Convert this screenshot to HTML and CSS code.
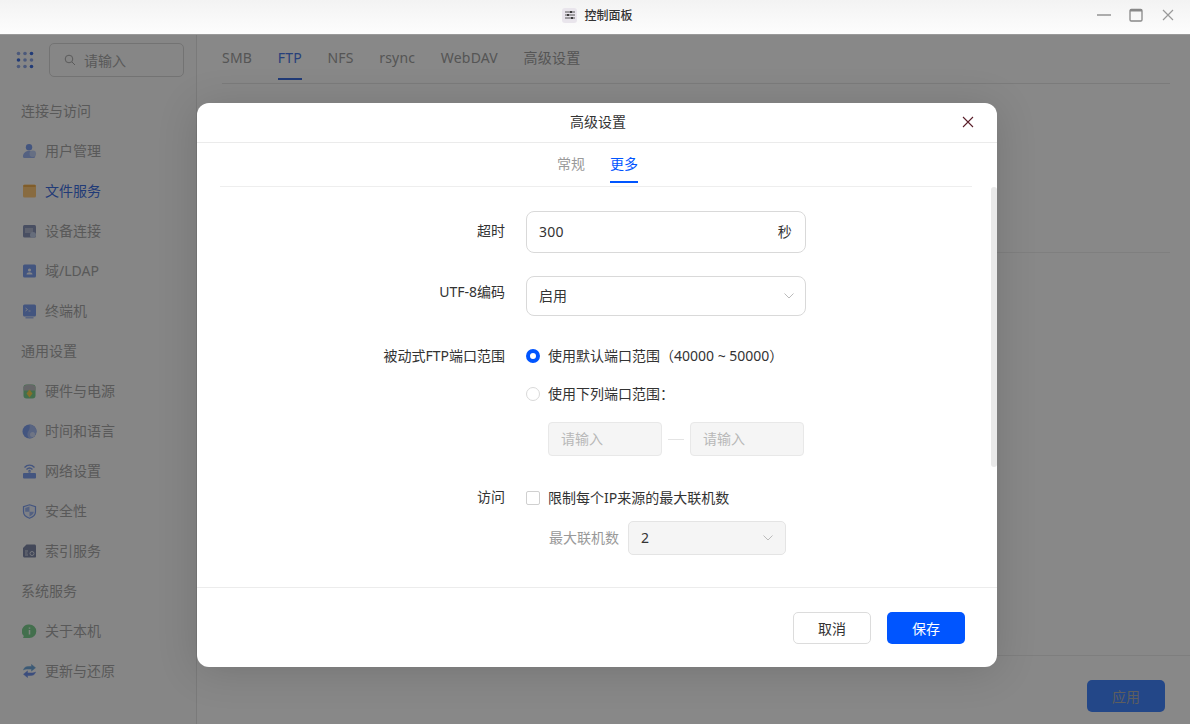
FILE: index.html
```html
<!DOCTYPE html>
<html>
<head>
    <meta charset="utf-8">
    <title>控制面板</title>
    <link rel="stylesheet" href="styles.css">
</head>
<body>
<div class="titlebar">
    <div class="title-center">
        <span class="app-icon">
            <svg width="14" height="14" viewBox="0 0 14 14"><path d="M2 4h10M2 7h10M2 10h10" stroke="#555" stroke-width="1"/><path d="M8 3v2M5 6v2M9 9v2" stroke="#222" stroke-width="1.6"/></svg>
        </span>
        <span class="app-title">控制面板</span>
    </div>
    <div class="win-buttons">
        <svg width="14" height="14" viewBox="0 0 14 14"><path d="M0 7h14" stroke="#999" stroke-width="1.6"/></svg>
        <svg width="14" height="14" viewBox="0 0 14 14"><rect x="1" y="1.5" width="12" height="11.5" rx="1.2" fill="none" stroke="#888" stroke-width="1.3"/><path d="M1 2.5h12" stroke="#888" stroke-width="2"/></svg>
        <svg width="14" height="14" viewBox="0 0 14 14"><path d="M2 2l10 10M12 2L2 12" stroke="#999" stroke-width="1.2"/></svg>
    </div>
</div>

<div class="main">
    <div class="sidebar">
        <div class="side-top">
            <svg class="grid-icon" width="18" height="18" viewBox="0 0 18 18">
                <g fill="#8fa8e6"><circle cx="2.5" cy="2.5" r="1.8"/><circle cx="9" cy="2.5" r="1.8"/><circle cx="9" cy="9" r="1.8"/><circle cx="15.5" cy="9" r="1.8"/><circle cx="2.5" cy="15.500" r="1.8"/><circle cx="9" cy="15.500" r="1.8"/></g>
                <g fill="#3f6fe0"><circle cx="15.5" cy="2.5" r="1.8"/><circle cx="2.5" cy="9" r="1.8"/><circle cx="15.5" cy="15.500" r="1.8"/></g>
            </svg>
            <div class="side-search">
                <svg width="12" height="12" viewBox="0 0 12 12"><circle cx="5" cy="5" r="3.8" fill="none" stroke="#aaa" stroke-width="1"/><path d="M8 8l3 3" stroke="#aaa" stroke-width="1"/></svg>
                <span>请输入</span>
            </div>
        </div>
        <div class="side-label">连接与访问</div>
        <div class="side-item">
            <svg width="16" height="16" viewBox="0 0 16 16"><circle cx="7.5" cy="4" r="3.4" fill="#7f9fee"/><path d="M1 14c0-4 3-6 6.500-6S14 10 14 14c0 1-1 1.500-2 1.500H3c-1 0-2-.5-2-1.500z" fill="#9db6f2"/><circle cx="11.500" cy="11" r="3.500" fill="#c0d0f6"/></svg>
            <span>用户管理</span>
        </div>
        <div class="side-item active">
            <svg width="14" height="14" viewBox="0 0 14 14"><rect x="0.500" y="0.500" width="13" height="13" rx="1.500" fill="#ffc878"/><rect x="1" y="1" width="12" height="2" fill="#f0ae50"/></svg>
            <span>文件服务</span>
        </div>
        <div class="side-item">
            <svg width="15" height="15" viewBox="0 0 15 15"><rect x="1" y="1" width="13" height="12.500" rx="1.500" fill="#8a94b8"/><path d="M4 4v5M6 4v5M8 4v5M10 4v5" stroke="#d4d9e6" stroke-width="1"/><circle cx="11" cy="11" r="3" fill="#c0cce6"/></svg>
            <span>设备连接</span>
        </div>
        <div class="side-item">
            <svg width="14" height="14" viewBox="0 0 14 14"><rect x="0.500" y="0.500" width="13" height="13" rx="1.500" fill="#7f9fee"/><circle cx="7" cy="6" r="1.600" fill="#f2f5fd"/><path d="M4 10.500c0-3 6-3 6 0z" fill="#f2f5fd"/></svg>
            <span>域/LDAP</span>
        </div>
        <div class="side-item">
            <svg width="14" height="15" viewBox="0 0 14 15"><rect x="0.500" y="0.500" width="13" height="12" rx="1.500" fill="#7f9fee"/><rect x="3" y="13" width="8" height="1.500" fill="#a5bbf2"/><path d="M3 4l2 1.500L3 7M6 7h2" stroke="#f2f5fd" stroke-width=".8" fill="none"/></svg>
            <span>终端机</span>
        </div>
        <div class="side-label">通用设置</div>
        <div class="side-item">
            <svg width="14" height="15" viewBox="0 0 14 15"><rect x="1" y="0.500" width="12" height="14" rx="3" fill="#7ed091"/><path d="M1 3.500c0-4 12-4 12 0v3H1z" fill="#c0c0c4"/><path d="M7 5.500l3 4-3 4-3-4z" fill="#f7d050"/></svg>
            <span>硬件与电源</span>
        </div>
        <div class="side-item">
            <svg width="15" height="15" viewBox="0 0 15 15"><circle cx="7.500" cy="7.500" r="7" fill="#7f9fee"/><path d="M7.500.5a7 7 0 0 1 0 14c-2-2-3-4.500-1-7.500s1-5 1-6.500z" fill="#a5bbf2"/><circle cx="10.500" cy="10.500" r="2.500" fill="#d0dcf8"/></svg>
            <span>时间和语言</span>
        </div>
        <div class="side-item">
            <svg width="14" height="15" viewBox="0 0 14 15"><path d="M2 3.500c3-3 7-3 10 0M4 5.500c2-2 4-2 6 0" stroke="#7f9fee" stroke-width="1.400" fill="none"/><circle cx="7" cy="7" r="1.200" fill="#7f9fee"/><rect x="0.500" y="9" width="13" height="5.500" rx="1" fill="#7f9fee"/><path d="M6 7h2v2H6z" fill="#a5bbf2"/></svg>
            <span>网络设置</span>
        </div>
        <div class="side-item">
            <svg width="14" height="15" viewBox="0 0 14 15"><path d="M7 .8l6 2v5c0 3.500-3 5.500-6 6.500-3-1-6-3-6-6.500v-5z" fill="#eef2fc" stroke="#7f9fee" stroke-width="1.200"/><path d="M7 2.500v5.200H2.700v-3.800zM7 7.700h4.300c0 2.300-2 3.700-4.300 4.700z" fill="#9db6f2"/></svg>
            <span>安全性</span>
        </div>
        <div class="side-item">
            <svg width="14" height="14" viewBox="0 0 14 14"><path d="M4 .5h8c.8 0 1.500.7 1.500 1.500v10.500c0 .6-.5 1-1 1H2c-.8 0-1.500-.7-1.500-1.500V4z" fill="#7f88a8"/><path d="M2.500 7h3M2.500 9h2.500M2.500 11h3" stroke="#dde1ea" stroke-width=".9"/><circle cx="9.500" cy="9.500" r="2" fill="none" stroke="#dde1ea" stroke-width="1"/></svg>
            <span>索引服务</span>
        </div>
        <div class="side-label">系统服务</div>
        <div class="side-item">
            <svg width="14" height="15" viewBox="0 0 14 15"><path d="M7 .5a6.800 6.800 0 0 1 0 13.600H1.500c-.7 0-1-.5-.7-1l.6-1A6.800 6.800 0 0 1 7 .5z" fill="#7ed091"/><path d="M7 3.500v1.200M7 6v4.500" stroke="#f0faf2" stroke-width="1.500"/></svg>
            <span>关于本机</span>
        </div>
        <div class="side-item">
            <svg width="14" height="14" viewBox="0 0 14 14"><path d="M1 6c.5-2.500 2.500-3.500 5-3.500h3V.5l4 3.300-4 3.300v-2H6C4 5.100 2.500 5 1 6z" fill="#6fa8dc" stroke="#6fa8dc" stroke-width=".5"/><path d="M13 8c-.5 2.500-2.500 3.500-5 3.500H5v2L1 10.200l4-3.300v2h3c2 0 3.500.1 5-.9z" fill="#6f90ea" stroke="#6f90ea" stroke-width=".5"/></svg>
            <span>更新与还原</span>
        </div>
    </div>

    <div class="content">
        <div class="content-tabs">
            <span>SMB</span>
            <span class="current">FTP</span>
            <span>NFS</span>
            <span>rsync</span>
            <span>WebDAV</span>
            <span>高级设置</span>
        </div>
        <div class="content-line"></div>
        <div class="content-foot">
            <button class="apply-btn">应用</button>
        </div>
    </div>

    <div class="overlay">
        <div class="modal">
            <div class="modal-head">
                <span>高级设置</span>
                <svg class="modal-close" width="12" height="12" viewBox="0 0 12 12"><path d="M1 1l10 10M11 1L1 11" stroke="#5a1f2a" stroke-width="1.100"/></svg>
            </div>
            <div class="modal-tabs">
                <span>常规</span>
                <span class="current">更多</span>
            </div>
            <div class="modal-body">
                <div class="scrollbar"></div>
                <div class="form-row row-timeout">
                    <label class="form-label">超时</label>
                    <div class="field field-input">
                        <span class="value">300</span>
                        <span class="value unit">秒</span>
                    </div>
                </div>
                <div class="form-row row-utf">
                    <label class="form-label">UTF-8编码</label>
                    <div class="field field-select">
                        <span class="value">启用</span>
                        <svg width="10" height="6" viewBox="0 0 10 6"><path d="M.5.500L5 5 9.500.5" fill="none" stroke="#bbb" stroke-width="1"/></svg>
                    </div>
                </div>
                <div class="form-row row-passive">
                    <label class="form-label">被动式FTP端口范围</label>
                    <div class="options">
                        <div class="option">
                            <span class="radio checked"></span>
                            <span class="value">使用默认端口范围（40000 ~ 50000）</span>
                        </div>
                        <div class="option second">
                            <span class="radio"></span>
                            <span class="value">使用下列端口范围：</span>
                        </div>
                        <div class="port-range">
                            <div class="port-input">请输入</div>
                            <span class="port-dash"></span>
                            <div class="port-input">请输入</div>
                        </div>
                    </div>
                </div>
                <div class="form-row row-access">
                    <label class="form-label">访问</label>
                    <div class="options">
                        <div class="option">
                            <span class="checkbox"></span>
                            <span class="value">限制每个IP来源的最大联机数</span>
                        </div>
                        <div class="max-row">
                            <span class="value max-label">最大联机数</span>
                            <div class="max-select">
                                <span class="value">2</span>
                                <svg width="10" height="6" viewBox="0 0 10 6"><path d="M.5.500L5 5 9.500.5" fill="none" stroke="#bbb" stroke-width="1"/></svg>
                            </div>
                        </div>
                    </div>
                </div>
            </div>
            <div class="modal-foot">
                <button class="btn btn-cancel">取消</button>
                <button class="btn btn-save">保存</button>
            </div>
        </div>
    </div>
</div>
</body>
</html>
```

FILE: styles.css
```css
* {
    box-sizing: border-box;
}

html, body {
    height: 100%;
}

body {
    margin: 0;
    overflow: hidden;
    display: flex;
    flex-direction: column;
    font-family: "Noto Sans", "Noto Sans CJK SC", sans-serif;
    font-size: 14px;
    color: #333;
    background-color: #fff;
}

/* window title */
.titlebar {
    height: 35px;
    flex: none;
    display: flex;
    align-items: center;
    justify-content: center;
    padding-bottom: 4px;
    background: linear-gradient(#f3f3f3, #fdfdfd);
    border-bottom: 1px solid #9a9a9a;
}

.title-center {
    display: flex;
    align-items: center;
    gap: 7px;
    padding-left: 5px;
}

.app-icon {
    width: 15px;
    height: 15px;
    display: flex;
    align-items: center;
    justify-content: center;
    background-color: #e9e5ec;
    border-radius: 3px;
}

.app-title {
    font-size: 12px;
    font-weight: 500;
}

.win-buttons {
    position: absolute;
    top: 8px;
    right: 15px;
    display: flex;
    gap: 18px;
}

/* page behind the dialog */
.main {
    position: relative;
    flex: 1;
    display: flex;
}

.sidebar {
    width: 197px;
    flex: none;
    padding-top: 8px;
    border-right: 1px solid #e4e4e4;
    background-color: #fbfbfb;
}

.side-top {
    display: flex;
    align-items: center;
    height: 34px;
    padding-left: 16px;
    margin-bottom: 14px;
}

.grid-icon {
    margin-right: 15px;
}

.side-search {
    width: 135px;
    height: 34px;
    display: flex;
    align-items: center;
    gap: 8px;
    padding-left: 14px;
    border: 1px solid #d8d8d8;
    border-radius: 5px;
    color: #a8a8a8;
}

.side-label {
    height: 40px;
    line-height: 40px;
    padding-left: 21px;
    color: #a8a8a8;
}

.side-item {
    height: 40px;
    display: flex;
    align-items: center;
    padding-left: 22px;
    color: #a8a8a8;
}

.side-item span {
    padding-bottom: 2px;
}

.side-item svg {
    width: 15px;
    margin-right: 8px;
}

.side-item.active {
    color: #3f6fe0;
}

.content {
    flex: 1;
    position: relative;
    padding: 0 20px 0 25px;
    background-color: #fff;
    display: flex;
    flex-direction: column;
}

.content-tabs {
    display: flex;
    gap: 25.6px;
    height: 49px;
    padding-top: 12px;
    letter-spacing: 0.2px;
    border-bottom: 1px solid #e6e6e6;
    color: #a0a0a0;
}

.content-tabs span {
    height: 33px;
    line-height: 22px;
}

.content-tabs .current {
    color: #4a78e6;
    border-bottom: 2px solid #3f6fe0;
}

.content-line {
    height: 1px;
    margin-top: 168px;
    background-color: #efefef;
}

.content-foot {
    margin: auto -20px 0 -25px;
    height: 69px;
    padding: 24px 25px 0 0;
    border-top: 1px solid #ededed;
    display: flex;
    justify-content: flex-end;
}

.apply-btn {
    width: 78px;
    height: 32px;
    border: 0;
    border-radius: 5px;
    font: inherit;
    color: #b0b0b0;
    background-color: #4285ff;
}

/* dialog */
.overlay {
    position: absolute;
    top: 0;
    right: 0;
    bottom: 0;
    left: 0;
    display: flex;
    justify-content: center;
    padding: 68px 0 0 4px;
    background-color: rgba(0, 0, 0, 0.467);
}

.modal {
    width: 800px;
    height: 564px;
    display: flex;
    flex-direction: column;
    background-color: #fff;
    border-radius: 12px;
    box-shadow: 0 4px 40px rgba(0, 0, 0, 0.15);
    overflow: hidden;
}

.modal-head {
    position: relative;
    height: 40px;
    flex: none;
    line-height: 38px;
    padding-left: 2px;
    text-align: center;
    border-bottom: 1px solid #ebebeb;
}

.modal-close {
    position: absolute;
    top: 13px;
    right: 23px;
}

.modal-tabs {
    height: 44px;
    flex: none;
    margin: 0 25px 0 23px;
    display: flex;
    justify-content: center;
    gap: 25px;
    padding: 11px 0 0 3px;
    border-bottom: 1px solid #eeeeee;
    color: #9a9a9a;
}

.modal-tabs span {
    height: 29px;
    line-height: 20px;
}

.modal-tabs .current {
    color: #0055ff;
    border-bottom: 2px solid #0055ff;
}

.modal-body {
    position: relative;
    height: 401px;
    flex: none;
    border-bottom: 1px solid #ececec;
}

.scrollbar {
    position: absolute;
    top: 0;
    right: 0;
    width: 6px;
    height: 280px;
    border-radius: 3px;
    background-color: #e9e9e9;
}

.form-row {
    display: flex;
}

.form-label {
    width: 308px;
    margin-right: 21px;
    flex: none;
    text-align: right;
    line-height: 20px;
}

.value {
    padding-bottom: 2px;
}

.row-timeout {
    margin-top: 24px;
}

.row-timeout .form-label {
    line-height: 40px;
}

.row-utf {
    margin-top: 23px;
}

.row-utf .form-label {
    line-height: 32px;
}

.row-passive {
    margin-top: 30px;
}

.row-access {
    margin-top: 32px;
}

.row-access .form-label {
    line-height: 18px;
}

.field {
    width: 280px;
    display: flex;
    align-items: center;
    justify-content: space-between;
    padding: 0 13px 0 12px;
    border: 1px solid #d9d9d9;
    border-radius: 8px;
}

.field-input {
    height: 42px;
    letter-spacing: 0.3px;
}

.field-select {
    height: 40px;
    padding-right: 11px;
}

.options {
    display: flex;
    flex-direction: column;
}

.option {
    height: 20px;
    display: flex;
    align-items: center;
    gap: 8px;
}

.option.second {
    margin-top: 18px;
}

.radio {
    width: 14px;
    height: 14px;
    border-radius: 50%;
    border: 1px solid #d9d9d9;
    background-color: #fff;
}

.radio.checked {
    border: 4px solid #0055ff;
}

.checkbox {
    width: 14px;
    height: 14px;
    border: 1px solid #d0d0d0;
    border-radius: 2px;
}

.port-range {
    display: flex;
    align-items: center;
    margin: 18px 0 0 22px;
}

.port-input {
    width: 114px;
    height: 34px;
    line-height: 31px;
    padding-left: 12px;
    color: #b8b8b8;
    background-color: #f5f5f5;
    border: 1px solid #e8e8e8;
    border-radius: 4px;
}

.port-dash {
    width: 16px;
    height: 1px;
    margin: 0 6px;
    background-color: #e4e4e4;
}

.max-row {
    display: flex;
    align-items: center;
    margin: 13px 0 0 23px;
}

.max-label {
    width: 71px;
    margin-right: 8px;
    color: #999;
}

.max-select {
    width: 158px;
    height: 34px;
    display: flex;
    align-items: center;
    justify-content: space-between;
    padding: 0 12px;
    background-color: #f5f5f5;
    border: 1px solid #e4e4e4;
    border-radius: 5px;
}

.modal-foot {
    flex: 1;
    display: flex;
    justify-content: flex-end;
    gap: 16px;
    padding: 24px 32px 0 0;
}

.btn {
    width: 78px;
    height: 32px;
    font: inherit;
    border-radius: 5px;
}

.btn-cancel {
    color: #333;
    background-color: #fff;
    border: 1px solid #dcdcdc;
}

.btn-save {
    color: #fff;
    background-color: #0055ff;
    border: 0;
}
```
